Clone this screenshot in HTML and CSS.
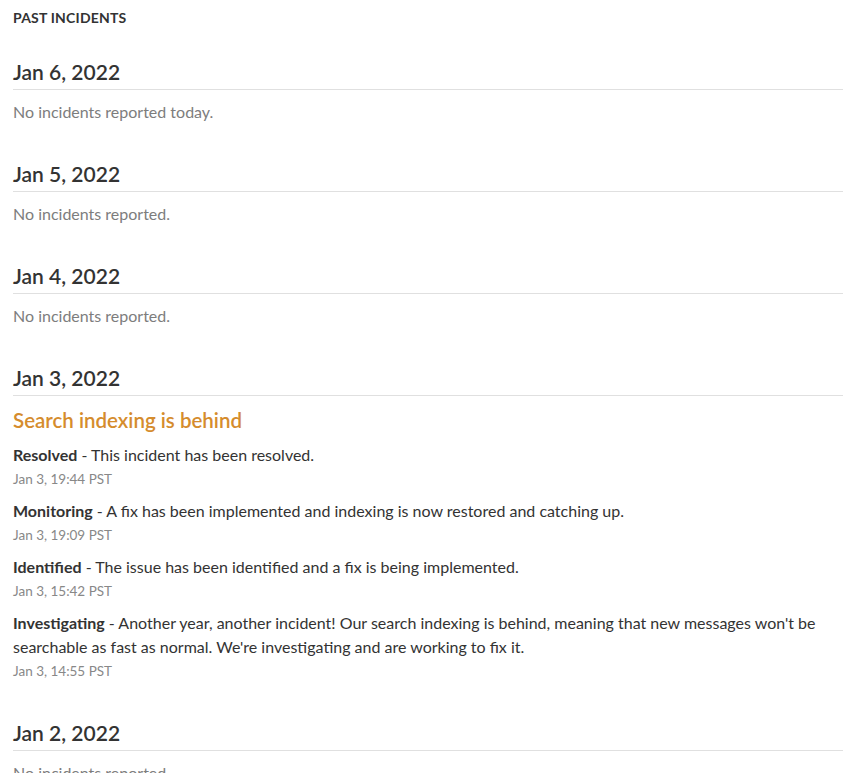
FILE: index.html
```html
<!DOCTYPE html>
<html lang="en">
<head>
    <meta charset="UTF-8">
    <meta name="viewport" content="width=device-width, initial-scale=1.0">
    <title>Past Incidents</title>
    <link rel="stylesheet" href="styles.css">
</head>
<body>
    <div class="past-incidents">
        <h2 class="section-title">Past Incidents</h2>

        <div class="day">
            <h3 class="day-date">Jan 6, 2022</h3>
            <p class="no-incidents">No incidents reported today.</p>
        </div>

        <div class="day">
            <h3 class="day-date">Jan 5, 2022</h3>
            <p class="no-incidents">No incidents reported.</p>
        </div>

        <div class="day">
            <h3 class="day-date">Jan 4, 2022</h3>
            <p class="no-incidents">No incidents reported.</p>
        </div>

        <div class="day">
            <h3 class="day-date">Jan 3, 2022</h3>
            <div class="incident">
                <a class="incident-title" href="#">Search indexing is behind</a>
                <div class="update">
                    <p class="update-body"><strong>Resolved</strong> - This incident has been resolved.</p>
                    <small class="update-time">Jan 3, 19:44 PST</small>
                </div>
                <div class="update">
                    <p class="update-body"><strong>Monitoring</strong> - A fix has been implemented and indexing is now restored and catching up.</p>
                    <small class="update-time">Jan 3, 19:09 PST</small>
                </div>
                <div class="update">
                    <p class="update-body"><strong>Identified</strong> - The issue has been identified and a fix is being implemented.</p>
                    <small class="update-time">Jan 3, 15:42 PST</small>
                </div>
                <div class="update">
                    <p class="update-body"><strong>Investigating</strong> - Another year, another incident! Our search indexing is behind, meaning that new messages won't be searchable as fast as normal. We're investigating and are working to fix it.</p>
                    <small class="update-time">Jan 3, 14:55 PST</small>
                </div>
            </div>
        </div>

        <div class="day">
            <h3 class="day-date">Jan 2, 2022</h3>
            <p class="no-incidents">No incidents reported.</p>
        </div>
    </div>
</body>
</html>
```

FILE: styles.css
```css
body {
    margin: 0;
    padding: 0;
    background-color: #ffffff;
    color: #333333;
    font-family: Lato, "Open Sans", sans-serif;
}
.past-incidents {
    padding: 8px 0 0 13px;
}
.section-title {
    margin: 0;
    font-size: 14px;
    line-height: 20px;
    font-weight: 700;
    letter-spacing: 0.2px;
    text-transform: uppercase;
    color: #333333;
}
.day {
    margin-top: 32px;
}
.day + .day {
    margin-top: 38px;
}
.day-date {
    margin: 0;
    padding-bottom: 5px;
    font-size: 21px;
    line-height: 24px;
    font-weight: 600;
    color: #333333;
    border-bottom: 1px solid #e0e0e0;
}
.no-incidents {
    margin: 10px 0 0 0;
    font-size: 16px;
    line-height: 24px;
    color: #7d7d7d;
}
.incident {
    margin-top: 12px;
}
.incident-title {
    display: block;
    font-size: 20.5px;
    line-height: 24px;
    font-weight: 600;
    color: #d58c2d;
    text-decoration: none;
}
.update {
    margin-top: 8px;
}
.update:first-of-type {
    margin-top: 11px;
}
.update-body {
    margin: 0;
    font-size: 16px;
    line-height: 24px;
    color: #333333;
}
.update-body strong {
    font-weight: 700;
}
.update-time {
    display: block;
    font-size: 13.5px;
    line-height: 24px;
    color: #888888;
}
```
